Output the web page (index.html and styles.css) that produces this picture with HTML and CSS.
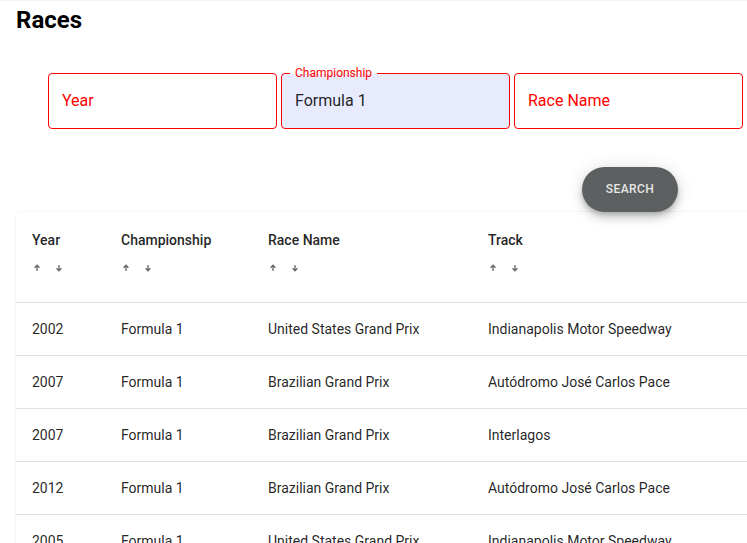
FILE: index.html
```html
<!DOCTYPE html>
<html>
<head>
<meta charset="utf-8">
<link rel="stylesheet" href="styles.css">
</head>
<body>
<div class="topline"></div>
<main class="page">
  <h1 class="title">Races</h1>
  <form class="filters">
    <div class="field"><span class="placeholder">Year</span></div>
    <div class="field filled">
      <span class="legend">Championship</span>
      <span class="value">Formula 1</span>
    </div>
    <div class="field"><span class="placeholder">Race Name</span></div>
  </form>
  <div class="actions">
    <button type="button" class="search">SEARCH</button>
  </div>
  <section class="card">
    <table class="races">
      <thead>
        <tr>
          <th class="c1"><div class="h">Year</div><div class="sort"><svg viewBox="0 0 8 8"><path d="M4 7V1.5M1.6 3.8L4 1.2 6.4 3.8"/></svg><svg viewBox="0 0 8 8"><path d="M4 1v5.5M1.6 4.2L4 6.8 6.4 4.2"/></svg></div></th>
          <th class="c2"><div class="h">Championship</div><div class="sort"><svg viewBox="0 0 8 8"><path d="M4 7V1.5M1.6 3.8L4 1.2 6.4 3.8"/></svg><svg viewBox="0 0 8 8"><path d="M4 1v5.5M1.6 4.2L4 6.8 6.4 4.2"/></svg></div></th>
          <th class="c3"><div class="h">Race Name</div><div class="sort"><svg viewBox="0 0 8 8"><path d="M4 7V1.5M1.6 3.8L4 1.2 6.4 3.8"/></svg><svg viewBox="0 0 8 8"><path d="M4 1v5.5M1.6 4.2L4 6.8 6.4 4.2"/></svg></div></th>
          <th class="c4"><div class="h">Track</div><div class="sort"><svg viewBox="0 0 8 8"><path d="M4 7V1.5M1.6 3.8L4 1.2 6.4 3.8"/></svg><svg viewBox="0 0 8 8"><path d="M4 1v5.5M1.6 4.2L4 6.8 6.4 4.2"/></svg></div></th>
        </tr>
      </thead>
      <tbody>
        <tr><td>2002</td><td>Formula 1</td><td>United States Grand Prix</td><td>Indianapolis Motor Speedway</td></tr>
        <tr><td>2007</td><td>Formula 1</td><td>Brazilian Grand Prix</td><td>Autódromo José Carlos Pace</td></tr>
        <tr><td>2007</td><td>Formula 1</td><td>Brazilian Grand Prix</td><td>Interlagos</td></tr>
        <tr><td>2012</td><td>Formula 1</td><td>Brazilian Grand Prix</td><td>Autódromo José Carlos Pace</td></tr>
        <tr><td>2005</td><td>Formula 1</td><td>United States Grand Prix</td><td>Indianapolis Motor Speedway</td></tr>
      </tbody>
    </table>
  </section>
</main>
</body>
</html>
```

FILE: styles.css
```css
html, body {
  margin: 0;
  padding: 0;
  background: #fff;
  overflow: hidden;
  font-family: Roboto, "Liberation Sans", sans-serif;
  color: rgba(0, 0, 0, 0.87);
}

.topline {
  height: 1px;
  background: #f3f3f3;
}

.page {
  padding: 5px 0 0 16px;
}

.title {
  margin: 0;
  font-size: 24px;
  line-height: 28px;
  font-weight: 700;
  color: #000;
}

.filters {
  display: flex;
  gap: 4px;
  margin: 39px 0 0 32px;
}

.field {
  position: relative;
  box-sizing: border-box;
  width: 229px;
  height: 56px;
  border: 1px solid #ff0000;
  border-radius: 4px;
  display: flex;
  align-items: center;
  padding: 0 13px 2px;
  font-size: 16px;
}

.placeholder {
  color: #ff0000;
}

.filled {
  background: #e8ebfd;
}

.value {
  color: rgba(0, 0, 0, 0.87);
}

.legend {
  position: absolute;
  left: 8px;
  top: -8px;
  padding: 0 5px;
  font-size: 12px;
  line-height: 14px;
  color: #ff0000;
  background: linear-gradient(#fff 0 8px, #e8ebfd 8px);
}

.actions {
  display: flex;
  justify-content: flex-end;
  padding: 38px 69px 0 0;
}

.search {
  width: 96px;
  height: 45px;
  border: none;
  border-radius: 23px;
  background: #5d6060;
  color: #e6e6e6;
  font-family: Roboto, "Liberation Sans", sans-serif;
  font-size: 12px;
  font-weight: 500;
  letter-spacing: 0.4px;
  padding: 0 0 1px;
  box-shadow: 0 3px 5px -1px rgba(0,0,0,0.2), 0 6px 10px 0 rgba(0,0,0,0.14), 0 1px 18px 0 rgba(0,0,0,0.12);
}

.card {
  width: 780px;
  background: #fff;
  border-radius: 4px;
  box-shadow: 0 0 2px rgba(0, 0, 0, 0.12), 0 1px 1px rgba(0,0,0,0.04);
}

.races {
  border-collapse: collapse;
  width: 100%;
  font-size: 14px;
}

.races th, .races td {
  text-align: left;
  padding: 0 16px;
  border-bottom: 1px solid #e0e0e0;
}

.races th {
  height: 90px;
  font-weight: 500;
  vertical-align: top;
}

.races td {
  height: 52px;
  font-weight: 400;
}

.c1 { width: 57px; }
.c2 { width: 115px; }
.c3 { width: 188px; }

.h {
  padding-top: 18px;
  line-height: 20px;
}

.sort {
  display: flex;
  gap: 14px;
  padding: 14px 0 0 1px;
}

.sort svg {
  width: 8px;
  height: 8px;
  fill: none;
  stroke: #666;
  stroke-width: 1.3;
}
```
